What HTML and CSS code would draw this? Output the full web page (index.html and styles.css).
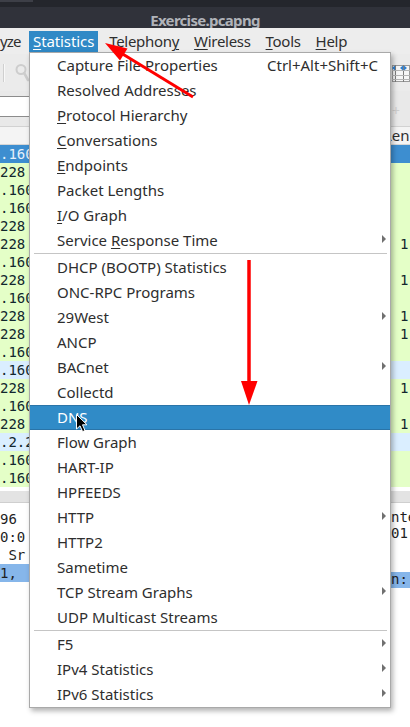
FILE: index.html
```html
<!DOCTYPE html>
<html>
<head>
<meta charset="utf-8">
<title>Exercise.pcapng</title>
<link rel="stylesheet" href="styles.css">
</head>
<body>
<div class="window">
  <div class="topstrip"><div class="tab"></div></div>
  <div class="titlebar">Exercise.pcapng</div>
  <div class="menubar">
    <span class="mb-item first">yze</span>
    <span class="mb-item active"><u>S</u>tatistics</span>
    <span class="mb-item">Telephon<u>y</u></span>
    <span class="mb-item"><u>W</u>ireless</span>
    <span class="mb-item"><u>T</u>ools</span>
    <span class="mb-item"><u>H</u>elp</span>
  </div>
  <div class="toolbar">
    <div class="tb-left">
      <span class="tb-sep"></span>
      <svg class="tb-search" width="14" height="19" viewBox="0 0 14 19">
        <circle cx="6" cy="6.5" r="4.5" fill="none" stroke="#cdcdcd" stroke-width="2"/>
        <line x1="9.2" y1="10.2" x2="13" y2="17" stroke="#cdcdcd" stroke-width="2.6" stroke-linecap="round"/>
      </svg>
    </div>
    <svg class="tb-resize" width="18" height="20" viewBox="0 0 18 20">
      <rect x="0.5" y="2.5" width="17" height="16" fill="#f6f6f6" stroke="#9a9a9a"/>
      <line x1="3.5" y1="2" x2="3.5" y2="19" stroke="#7d7d7d"/>
      <line x1="11.5" y1="2" x2="11.5" y2="19" stroke="#7d7d7d"/>
      <line x1="0" y1="7.5" x2="18" y2="7.5" stroke="#b5b5b5"/>
      <line x1="0" y1="12.5" x2="18" y2="12.5" stroke="#b5b5b5"/>
      <line x1="0" y1="16.5" x2="18" y2="16.5" stroke="#b5b5b5"/>
      <polygon points="0,5 3,2.5 3,7.5" fill="#2f7fd0"/>
      <polygon points="8,5 11,2.5 11,7.5" fill="#2f7fd0"/>
      <polygon points="15,5 12,2.5 12,7.5" fill="#2f7fd0"/>
    </svg>
  </div>
  <div class="filterbar">
    <div class="filter-entry"></div>
    <span class="filter-plus">+</span>
  </div>
  <div class="list-header"><span class="hdr-right">Len</span></div>
  <div class="list">
    <div class="row sel"><span class="c-left">.160</span><span class="c-right"></span></div>
    <div class="row g"><span class="c-left">228</span><span class="c-right"></span></div>
    <div class="row g"><span class="c-left">.160</span><span class="c-right"></span></div>
    <div class="row g"><span class="c-left">.160</span><span class="c-right"></span></div>
    <div class="row g"><span class="c-left">228</span><span class="c-right"></span></div>
    <div class="row g"><span class="c-left">228</span><span class="c-right">1</span></div>
    <div class="row g"><span class="c-left">.160</span><span class="c-right"></span></div>
    <div class="row g"><span class="c-left">228</span><span class="c-right">1</span></div>
    <div class="row g"><span class="c-left">.160</span><span class="c-right"></span></div>
    <div class="row g"><span class="c-left">228</span><span class="c-right">1</span></div>
    <div class="row g"><span class="c-left">228</span><span class="c-right">1</span></div>
    <div class="row g"><span class="c-left">.160</span><span class="c-right"></span></div>
    <div class="row b"><span class="c-left">.160</span><span class="c-right"></span></div>
    <div class="row g"><span class="c-left">228</span><span class="c-right">1</span></div>
    <div class="row g"><span class="c-left">.160</span><span class="c-right"></span></div>
    <div class="row g"><span class="c-left">228</span><span class="c-right">1</span></div>
    <div class="row b"><span class="c-left">.2.2</span><span class="c-right"></span></div>
    <div class="row g"><span class="c-left">.160</span><span class="c-right"></span></div>
    <div class="row g"><span class="c-left">.160</span><span class="c-right"></span></div>
  </div>
  <div class="hscroll"></div>
  <div class="splitter"></div>
  <div class="details">
    <div class="det-left">
      <div class="drow">96</div>
      <div class="drow">0:0</div>
      <div class="drow">&nbsp;Sr</div>
      <div class="drow hl">1,</div>
    </div>
    <div class="det-right">
      <div class="rrow">nte</div>
      <div class="rrow">01:</div>
      <div class="rrow"></div>
      <div class="rrow"></div>
      <div class="rrow hl">n:</div>
    </div>
  </div>
</div>

<div class="menu">
  <div class="mi"><span class="lbl">Capture File Properties</span><span class="sc">Ctrl+Alt+Shift+C</span></div>
  <div class="mi">Resolved Addresses</div>
  <div class="mi"><u>P</u>rotocol Hierarchy</div>
  <div class="mi"><u>C</u>onversations</div>
  <div class="mi"><u>E</u>ndpoints</div>
  <div class="mi">Packet Lengths</div>
  <div class="mi"><u>I</u>/O Graph</div>
  <div class="mi sub"><span class="lbl">Service <u>R</u>esponse Time</span><span class="arr"></span></div>
  <div class="sep"></div>
  <div class="mi">DHCP (BOOTP) Statistics</div>
  <div class="mi">ONC-RPC Programs</div>
  <div class="mi sub"><span class="lbl">29West</span><span class="arr"></span></div>
  <div class="mi">ANCP</div>
  <div class="mi sub"><span class="lbl">BACnet</span><span class="arr"></span></div>
  <div class="mi">Collectd</div>
  <div class="mi hl">DNS</div>
  <div class="mi">Flow Graph</div>
  <div class="mi">HART-IP</div>
  <div class="mi">HPFEEDS</div>
  <div class="mi sub"><span class="lbl">HTTP</span><span class="arr"></span></div>
  <div class="mi">HTTP2</div>
  <div class="mi">Sametime</div>
  <div class="mi sub"><span class="lbl">TCP Stream Graphs</span><span class="arr"></span></div>
  <div class="mi">UDP Multicast Streams</div>
  <div class="sep"></div>
  <div class="mi sub"><span class="lbl">F5</span><span class="arr"></span></div>
  <div class="mi sub"><span class="lbl">IPv4 Statistics</span><span class="arr"></span></div>
  <div class="mi sub"><span class="lbl">IPv6 Statistics</span><span class="arr"></span></div>
</div>

<svg class="annot" width="410" height="727" viewBox="0 0 410 727">
  <line x1="193" y1="97" x2="121" y2="53" stroke="#ff0000" stroke-width="3"/>
  <polygon points="105,43 120,60.5 127.5,48.5" fill="#ff0000"/>
  <line x1="249" y1="260" x2="249" y2="383" stroke="#ff0000" stroke-width="3.5"/>
  <polygon points="241,381 257.5,381 249,405" fill="#ff0000"/>
</svg>

<svg class="cursor" width="13" height="19" viewBox="0 0 13 19">
  <polygon points="0.5,0.5 0.5,15 4,11.8 6.6,17.6 9,16.6 6.5,10.8 11,10.8" fill="#000" stroke="#fff" stroke-width="1" stroke-linejoin="round"/>
</svg>
</body>
</html>
```

FILE: styles.css
```css
html, body {
  margin: 0;
  padding: 0;
}
body {
  width: 410px;
  height: 727px;
  overflow: hidden;
  background: #ffffff;
  font-family: "Noto Sans", "DejaVu Sans", sans-serif;
  position: relative;
}
.window {
  display: flex;
  flex-direction: column;
  width: 410px;
  height: 727px;
}
.topstrip {
  height: 7px;
  background: #24262c;
}
.tab {
  width: 33px;
  height: 2px;
  background: #3d3f47;
}
.titlebar {
  height: 21px;
  line-height: 26px;
  background: #30323a;
  color: #b0b3b9;
  font-weight: bold;
  font-size: 15px;
  letter-spacing: -0.7px;
  text-align: center;
  overflow: visible;
}
.menubar {
  height: 26px;
  box-sizing: border-box;
  padding-top: 3px;
  background: #ededed;
  display: flex;
  gap: 7px;
  font-size: 15px;
  letter-spacing: -0.3px;
  color: #2f2f2f;
}
.mb-item {
  height: 22px;
  box-sizing: border-box;
  line-height: 20px;
  padding: 0 4px 2px;
  white-space: nowrap;
}
.mb-item.first {
  width: 22px;
  padding-left: 0;
  padding-right: 0;
  letter-spacing: -0.9px;
}
.mb-item.active {
  background: #3089c6;
  color: #ffffff;
  letter-spacing: -0.1px;
}
u {
  text-decoration: underline;
  text-underline-offset: 2px;
  text-decoration-thickness: 1px;
}
.toolbar {
  height: 37px;
  background: #ebebeb;
  display: flex;
  align-items: center;
  justify-content: space-between;
}
.tb-left {
  display: flex;
  align-items: center;
  gap: 11px;
  padding-left: 3px;
}
.tb-sep {
  width: 1px;
  height: 18px;
  background: #cfcfcf;
  box-shadow: 1px 0 0 #f8f8f8;
}
.filterbar {
  height: 36px;
  box-sizing: border-box;
  background: #e9e9e9;
  display: flex;
  align-items: flex-start;
  padding-top: 5px;
  border-bottom: 1px solid #d2d2d2;
}
.filter-entry {
  flex: 1;
  height: 21px;
  box-sizing: border-box;
  background: #ffffff;
  border-top: 1px solid #8c8c8c;
  border-bottom: 1px solid #8c8c8c;
  margin-right: 24px;
}
.filter-plus {
  width: 18px;
  font-size: 14px;
  line-height: 21px;
  color: #cfcfcf;
  margin-top: 4px;
}
.list-header {
  height: 18px;
  box-sizing: border-box;
  background: #f4f4f4;
  border-bottom: 1px solid #d6d6d6;
  font-size: 15px;
  line-height: 17px;
  color: #2f2f2f;
  display: flex;
}
.hdr-right {
  margin-left: 384px;
  white-space: nowrap;
}
.list {
  height: 342px;
  overflow: hidden;
  font-family: "DejaVu Sans Mono", "Liberation Mono", monospace;
  font-size: 14px;
  color: #12272e;
}
.row {
  height: 18px;
  line-height: 18px;
  display: flex;
  white-space: nowrap;
}
.row.g { background: #e4ffc7; }
.row.b { background: #daeeff; }
.row.sel { background: #3d8ed0; color: #e6f0fa; }
.c-left { flex: 1; }
.c-right { width: 10px; overflow: visible; }
.hscroll {
  height: 4px;
  background: #ffffff;
}
.splitter {
  height: 12px;
  box-sizing: border-box;
  background: #e3e3e3;
  border-bottom: 1px solid #cfcfcf;
}
.details {
  flex: 1;
  display: flex;
  font-family: "DejaVu Sans Mono", "Liberation Mono", monospace;
  font-size: 14px;
  color: #1f1f1f;
  white-space: nowrap;
}
.det-left {
  width: 390px;
  padding-top: 7px;
}
.drow {
  height: 18px;
  line-height: 18px;
}
.drow.hl { background: #86b6ea; }
.det-right {
  flex: 1;
  padding-top: 7px;
  padding-left: 1px;
  overflow: hidden;
}
.rrow {
  height: 15.5px;
  line-height: 15.5px;
}
.rrow.hl { background: #86b6ea; }

/* dropdown menu overlay */
.menu {
  position: absolute;
  left: 29px;
  top: 52px;
  width: 360px;
  background: #ffffff;
  border: 1px solid #a9a9a9;
  box-shadow: 2px 3px 5px rgba(0, 0, 0, 0.3);
  font-size: 15px;
  color: #2e2e2e;
}
.mi {
  height: 25px;
  line-height: 25px;
  padding-left: 27px;
  display: flex;
  align-items: center;
  white-space: nowrap;
}
.mi .lbl { flex: 1; }
.mi .sc { margin-right: 12px; }
.mi.sub { padding-right: 4px; }
.arr {
  width: 0;
  height: 0;
  border-left: 4px solid #707070;
  border-top: 4px solid transparent;
  border-bottom: 4px solid transparent;
  margin-bottom: 4px;
}
.mi.hl {
  background: #308bc7;
  color: #ffffff;
  box-shadow: inset 0 1px 0 #2a74a8, inset 0 -1px 0 #2a74a8;
}
.sep {
  height: 2px;
  box-sizing: border-box;
  margin: 0 3px 0 4px;
  border-top: 1px solid #c5c5c5;
}

.annot {
  position: absolute;
  left: 0;
  top: 0;
  pointer-events: none;
}
.cursor {
  position: absolute;
  left: 75.5px;
  top: 413.5px;
}
```
